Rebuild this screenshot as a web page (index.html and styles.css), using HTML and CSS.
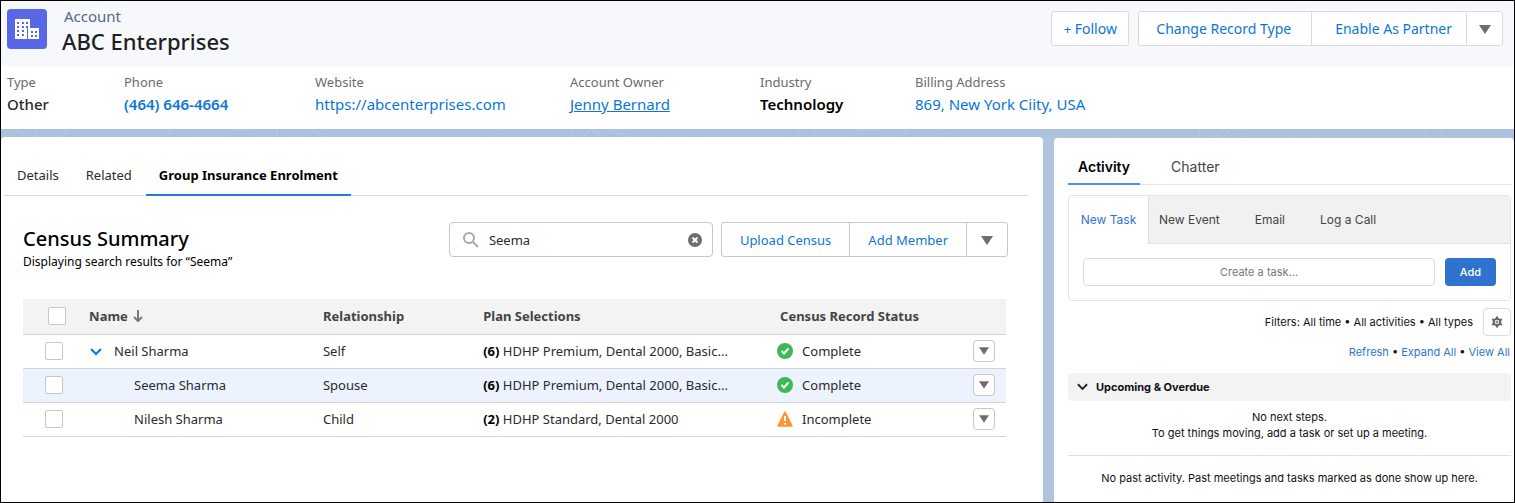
FILE: index.html
```html
<!DOCTYPE html>
<html lang="en">
<head>
    <meta charset="UTF-8">
    <meta name="viewport" content="width=device-width, initial-scale=1.0">
    <title>ABC Enterprises | Account</title>
    <link rel="stylesheet" href="styles.css">
</head>
<body>
<div class="page">
    <header class="record-header">
        <svg class="record-icon" viewBox="0 0 40 40" aria-hidden="true">
            <rect width="40" height="40" rx="4" fill="#5867e8"/>
            <path fill="#fff" d="M8 10h15v9h9v11H8z"/>
            <path fill="#5867e8" d="M10 13h2v2h-2zm5 0h2v2h-2zm4 0h2v2h-2zM10 17h2v2h-2zm5 0h2v2h-2zm4 0h2v2h-2zM10 21h2v2h-2zm5 0h2v2h-2zM10 25h2v2h-2zm5 0h2v2h-2zM20 19h1v11h-1zM24 22h2v2h-2zm4 0h2v2h-2zM24 26h2v2h-2zm4 0h2v2h-2z"/>
        </svg>
        <div class="record-title">
            <p>Account</p>
            <h1>ABC Enterprises</h1>
        </div>
        <div class="record-actions">
            <button class="btn btn-follow"><small>+</small> Follow</button>
            <div class="btn-group">
                <button class="btn btn-change">Change Record Type</button>
                <button class="btn btn-enable">Enable As Partner</button>
                <button class="btn btn-more" aria-label="More actions"><svg class="caret" viewBox="0 0 12 9"><path d="M0 0h12L6 9z"/></svg></button>
            </div>
        </div>
    </header>

    <dl class="fields">
        <div><dt>Type</dt><dd class="strong">Other</dd></div>
        <div><dt>Phone</dt><dd class="bold"><a href="#">(464) 646-4664</a></dd></div>
        <div><dt>Website</dt><dd><a href="#">https://abcenterprises.com</a></dd></div>
        <div><dt>Account Owner</dt><dd><a class="underlined" href="#">Jenny Bernard</a></dd></div>
        <div><dt>Industry</dt><dd class="bold">Technology</dd></div>
        <div><dt>Billing Address</dt><dd><a href="#">869, New York Ciity, USA</a></dd></div>
    </dl>

    <svg class="band" viewBox="0 0 1513 8" preserveAspectRatio="xMidYMid slice" aria-hidden="true">
        <path d="M14 0l12 8M38 8l-4-8M62 8l4-8M166 8l4-8M184 8l3-8M230 0q10 3 20 0M275 8l2-8M310 0l14 8M490 8l6-8M570 8l2-8M582 8l8-8M590 0l12 8M606 0l24 8M662 0l6 8M690 8l8-8M796 8l2-8M812 8l3-8M855 0q10 3 22 0M902 8l4-8M940 0l10 8M1116 8l6-8M1198 8v-8M1210 8l14-8M1222 8l8-8M1232 0l12 8M1290 8l6-8M1316 8l6-8M1424 8l2-8M1440 8l2-8"/>
    </svg>

    <div class="columns">
        <main class="card">
            <nav class="tabs">
                <a href="#">Details</a>
                <a href="#">Related</a>
                <a class="active" href="#">Group Insurance Enrolment</a>
            </nav>

            <section class="census">
                <div class="census-head">
                    <div class="census-title">
                        <h2>Census Summary</h2>
                        <p>Displaying search results for “Seema”</p>
                    </div>
                    <div class="search">
                        <svg class="search-icon" viewBox="0 0 16 16" aria-hidden="true"><circle cx="6" cy="6" r="5"/><path d="M10 10l5 5"/></svg>
                        <input type="text" value="Seema" aria-label="Search members">
                        <button class="clear" aria-label="Clear search"><svg viewBox="0 0 14 14"><circle cx="7" cy="7" r="7"/><path d="M4.500 4.500l5 5M9.500 4.500l-5 5"/></svg></button>
                    </div>
                    <div class="btn-group census-actions">
                        <button class="btn">Upload Census</button>
                        <button class="btn">Add Member</button>
                        <button class="btn btn-more" aria-label="More actions"><svg class="caret" viewBox="0 0 12 9"><path d="M0 0h12L6 9z"/></svg></button>
                    </div>
                </div>

                <table class="census-table">
                    <colgroup>
                        <col class="col-check"><col class="col-name"><col class="col-relation"><col class="col-plan"><col class="col-status"><col class="col-action">
                    </colgroup>
                    <thead>
                        <tr>
                            <th><input type="checkbox" aria-label="Select all"></th>
                            <th>Name <svg class="sort" viewBox="0 0 10 12" aria-hidden="true"><path d="M5 0v11M1 7l4 4 4-4"/></svg></th>
                            <th>Relationship</th>
                            <th>Plan Selections</th>
                            <th>Census Record Status</th>
                            <th></th>
                        </tr>
                    </thead>
                    <tbody>
                        <tr>
                            <td><input type="checkbox" aria-label="Select Neil Sharma"></td>
                            <td class="parent"><button class="toggle" aria-label="Collapse"><svg viewBox="0 0 12 8"><path d="M1 1l5 5 5-5"/></svg></button>Neil Sharma</td>
                            <td>Self</td>
                            <td><b>(6)</b> HDHP Premium, Dental 2000, Basic...</td>
                            <td class="status"><svg viewBox="0 0 16 16" aria-hidden="true"><circle cx="8" cy="8" r="8" fill="#3dba56"/><path class="mark" d="M4.500 8l2.500 2.500 4.500-5"/></svg>Complete</td>
                            <td><button class="row-menu" aria-label="Row actions"><svg class="caret" viewBox="0 0 12 9"><path d="M0 0h12L6 9z"/></svg></button></td>
                        </tr>
                        <tr class="match">
                            <td><input type="checkbox" aria-label="Select Seema Sharma"></td>
                            <td class="child">Seema Sharma</td>
                            <td>Spouse</td>
                            <td><b>(6)</b> HDHP Premium, Dental 2000, Basic...</td>
                            <td class="status"><svg viewBox="0 0 16 16" aria-hidden="true"><circle cx="8" cy="8" r="8" fill="#3dba56"/><path class="mark" d="M4.500 8l2.500 2.500 4.500-5"/></svg>Complete</td>
                            <td><button class="row-menu" aria-label="Row actions"><svg class="caret" viewBox="0 0 12 9"><path d="M0 0h12L6 9z"/></svg></button></td>
                        </tr>
                        <tr>
                            <td><input type="checkbox" aria-label="Select Nilesh Sharma"></td>
                            <td class="child">Nilesh Sharma</td>
                            <td>Child</td>
                            <td><b>(2)</b> HDHP Standard, Dental 2000</td>
                            <td class="status"><svg viewBox="0 0 16 16" aria-hidden="true"><path d="M8 1l7 14H1z" fill="#ff9232" stroke="#ff9232" stroke-width="1.500" stroke-linejoin="round"/><path class="mark" d="M8 5v5M8 12v1.500"/></svg>Incomplete</td>
                            <td><button class="row-menu" aria-label="Row actions"><svg class="caret" viewBox="0 0 12 9"><path d="M0 0h12L6 9z"/></svg></button></td>
                        </tr>
                    </tbody>
                </table>
            </section>
        </main>

        <aside class="card activity">
            <nav class="side-tabs">
                <a class="active" href="#">Activity</a>
                <a href="#">Chatter</a>
            </nav>

            <div class="composer">
                <div class="composer-tabs">
                    <button class="active">New Task</button>
                    <div class="composer-rest">
                        <button>New Event</button>
                        <button>Email</button>
                        <button>Log a Call</button>
                    </div>
                </div>
                <div class="composer-body">
                    <input type="text" placeholder="Create a task..." aria-label="Create a task">
                    <button class="add">Add</button>
                </div>
            </div>

            <div class="filters">
                <span>Filters: All time • All activities • All types</span>
                <button class="settings" aria-label="Timeline settings">
                    <svg viewBox="0 0 12 12"><path d="M6 .5v2M6 9.500v2M1.200 3.200l1.800 1.100M9 7.700l1.800 1.100M1.200 8.800L3 7.700M9 4.300l1.800-1.100"/><circle cx="6" cy="6" r="3.300"/><circle class="hub" cx="6" cy="6" r="1"/></svg>
                </button>
            </div>
            <p class="links"><a href="#">Refresh</a> • <a href="#">Expand All</a> • <a href="#">View All</a></p>

            <h3 class="upcoming"><svg viewBox="0 0 12 8" aria-hidden="true"><path d="M1 1l5 5 5-5"/></svg>Upcoming &amp; Overdue</h3>
            <p class="empty">No next steps.<br>To get things moving, add a task or set up a meeting.</p>
            <p class="past">No past activity. Past meetings and tasks marked as done show up here.</p>
        </aside>
    </div>
</div>
</body>
</html>
```
FILE: styles.css
```css
* {
    box-sizing: border-box;
}
body, h1, h2, h3, p, dl, dd {
    margin: 0;
}
body {
    font-family: "Noto Sans", "Open Sans", sans-serif;
    font-size: 13px;
    line-height: 18px;
    color: #2b2b2b;
}
a {
    color: #0b76d8;
    text-decoration: none;
}
button, input {
    font: inherit;
}
button {
    padding: 0;
    border: none;
    background: none;
    cursor: pointer;
}
svg {
    flex: none;
}
.page {
    display: flex;
    flex-direction: column;
    min-height: 100vh;
    border: 1px solid #000;
    background: #fff;
}

/* Record header */
.record-header {
    display: flex;
    align-items: flex-start;
    padding: 6px 11px 9px 6px;
    background: #f7f8fb;
}
.record-icon {
    width: 40px;
    height: 40px;
    margin-top: 2px;
}
.record-title {
    margin-left: 15px;
}
.record-title p {
    padding-left: 2px;
    color: #54698d;
    font-size: 15px;
}
.record-title h1 {
    font-size: 22px;
    line-height: 32px;
    font-weight: 500;
    color: #1f1f1f;
}
.record-actions {
    display: flex;
    gap: 9px;
    margin: 4px 0 0 auto;
}
.btn {
    height: 35px;
    padding: 0 16px;
    border: 1px solid #dddbda;
    border-radius: 3px;
    background: #fff;
    color: #0b76d8;
    font-size: 14px;
    white-space: nowrap;
}
.btn small {
    font-size: 13px;
}
.btn-follow {
    width: 78px;
    padding: 0;
}
.btn-change {
    padding: 0 20px 0 17px;
}
.btn-enable {
    padding: 0 14px 0 23px;
}
.btn-group {
    display: flex;
}
.btn-group .btn + .btn {
    margin-left: -1px;
}
.btn-group .btn:not(:first-child) {
    border-top-left-radius: 0;
    border-bottom-left-radius: 0;
}
.btn-group .btn:not(:last-child) {
    border-top-right-radius: 0;
    border-bottom-right-radius: 0;
}
.btn-more {
    width: 37px;
    padding: 0;
}
.caret {
    width: 12px;
    height: 9px;
    fill: #706e6b;
}

/* Highlight fields */
.fields {
    display: grid;
    grid-template-columns: 117fr 191fr 255fr 190fr 155fr 599fr;
    padding: 7px 0 12px 6px;
}
.fields dt {
    color: #6b6b6b;
}
.fields dd {
    font-size: 15px;
    line-height: 26px;
}
.strong {
    font-weight: 500;
}
.bold {
    color: #000;
    font-weight: 600;
}
.underlined {
    text-decoration: underline;
}
.band {
    display: block;
    width: 100%;
    height: 8px;
    background: #abc2de;
    fill: none;
    stroke: #b6cae2;
}

/* Columns */
.columns {
    flex: 1;
    display: grid;
    grid-template-columns: 1042fr 460fr;
    gap: 11px;
    background: #b0c4de;
}
.card {
    background: #fff;
    border-radius: 4px 4px 0 0;
}
.tabs {
    display: flex;
    gap: 1px;
    margin: 18px 15px 0 3px;
    border-bottom: 1px solid #dddbda;
}
.tabs a {
    padding: 11px 13px 10px;
    color: #2b2b2b;
}
.tabs .active {
    margin-bottom: -1px;
    border-bottom: 2px solid #1b7fe0;
    color: #000;
    font-weight: 700;
}

/* Census list */
.census {
    padding: 26px 37px 0 22px;
}
.census-head {
    display: flex;
    align-items: flex-start;
    height: 50px;
    margin-right: -2px;
}
.census-title {
    margin-right: auto;
    padding-top: 1px;
    color: #000;
}
.census-title h2 {
    font-size: 20px;
    line-height: 32px;
    font-weight: 500;
}
.census-title p {
    font-size: 12px;
    line-height: 14px;
}
.search {
    display: flex;
    align-items: center;
    width: 264px;
    height: 35px;
    padding: 0 10px 0 13px;
    border: 1px solid #c9c7c5;
    border-radius: 4px;
}
.search-icon {
    width: 16px;
    height: 16px;
    fill: none;
    stroke: #a8a8a8;
    stroke-width: 2;
}
.search input {
    flex: 1;
    min-width: 0;
    padding: 0 0 0 10px;
    border: none;
    outline: none;
    color: #2b2b2b;
}
.clear svg {
    display: block;
    width: 14px;
    height: 14px;
    fill: #706e6b;
    stroke: #fff;
    stroke-width: 2;
}
.clear circle {
    stroke: none;
}
.census-actions {
    margin-left: 8px;
}
.census-actions .btn {
    padding: 0 18px;
    border-color: #c9c7c5;
    font-size: 13px;
}
.census-actions .btn-more {
    width: 42px;
    padding: 0;
}
.census-table {
    width: 100%;
    margin-top: 27px;
    border-collapse: collapse;
    table-layout: fixed;
}
.col-check { width: 5.5%; }
.col-name { width: 24%; }
.col-relation { width: 16.3%; }
.col-plan { width: 30.2%; }
.col-status { width: 20%; }
.census-table th, .census-table td {
    height: 34px;
    padding: 0 0 0 10px;
    border-bottom: 1px solid #d4d4d4;
    text-align: left;
    white-space: nowrap;
}
.census-table th {
    height: 35px;
    background: #f3f3f3;
    color: #444;
    font-weight: 700;
}
.census-table th:nth-child(2) {
    padding-left: 12px;
}
.census-table th:first-child {
    padding-left: 25px;
}
.census-table td:first-child {
    padding-left: 22px;
}
.census-table td:last-child {
    padding: 0 11px 0 0;
    text-align: right;
}
.census-table input {
    display: block;
    appearance: none;
    width: 18px;
    height: 18px;
    margin: 0;
    border: 1px solid #c9c7c5;
    border-radius: 2px;
    background: #fff;
}
.census-table b {
    color: #000;
    font-weight: 700;
}
.sort {
    width: 10px;
    height: 12px;
    margin-left: 2px;
    vertical-align: -1px;
    fill: none;
    stroke: #777;
    stroke-width: 2;
}
.census-table .parent {
    padding-left: 13px;
}
.census-table .child {
    padding-left: 57px;
}
.toggle {
    margin-right: 12px;
}
.toggle svg {
    width: 12px;
    height: 8px;
    fill: none;
    stroke: #0b76d8;
    stroke-width: 2;
}
.match {
    background: #ecf2fe;
}
.census-table .status {
    padding-left: 7px;
}
.status svg {
    width: 16px;
    height: 16px;
    margin-right: 9px;
    vertical-align: -3px;
}
.status .mark {
    fill: none;
    stroke: #fff;
    stroke-width: 2;
}
.row-menu {
    width: 22px;
    height: 22px;
    border: 1px solid #c9c7c5;
    border-radius: 4px;
    background: #fff;
    vertical-align: middle;
}
.row-menu .caret {
    display: block;
    width: 10px;
    height: 8px;
    margin: auto;
}

/* Activity panel */
.activity {
    padding: 18px 3px 0 14px;
    margin-top: 1px;
    font-family: Inter, sans-serif;
    font-size: 11px;
    line-height: 16px;
    color: #111;
}
.side-tabs {
    display: flex;
    gap: 21px;
    border-bottom: 1px solid #e5e5e5;
    font-size: 14px;
}
.side-tabs a {
    padding: 3px 10px 8px;
    color: #444;
}
.side-tabs .active {
    margin-bottom: -1px;
    border-bottom: 2px solid #4d8ff7;
    color: #000;
    font-weight: 600;
}
.composer {
    margin-top: 10px;
    border: 1px solid #e5e5e5;
    border-radius: 4px;
}
.composer-tabs {
    display: flex;
    height: 48px;
    font-size: 12px;
}
.composer-tabs button {
    color: #444;
}
.composer-tabs .active {
    width: 79px;
    color: #2f74cf;
}
.composer-rest {
    flex: 1;
    display: flex;
    gap: 35px;
    padding-left: 10px;
    border: solid #e0e0e0;
    border-width: 0 0 1px 1px;
    background: #f1f1f1;
}
.composer-body {
    display: flex;
    gap: 10px;
    padding: 14px;
}
.composer-body input {
    flex: 1;
    min-width: 0;
    height: 28px;
    border: 1px solid #dcdcdc;
    border-radius: 4px;
    text-align: center;
}
.composer-body input::placeholder {
    color: #777;
}
.add {
    width: 51px;
    height: 28px;
    border-radius: 4px;
    background: #2e74cf;
    color: #fff;
    font-weight: 500;
}
.filters {
    display: flex;
    justify-content: flex-end;
    align-items: center;
    gap: 10px;
    margin-top: 7px;
}
.settings {
    width: 28px;
    height: 28px;
    border: 1px solid #dcdcdc;
    border-radius: 4px;
}
.settings svg {
    display: block;
    width: 12px;
    height: 12px;
    margin: auto;
    fill: none;
    stroke: #666;
    stroke-width: 2;
}
.settings .hub {
    stroke-width: 1;
}
.links {
    margin-top: 8px;
    padding-right: 1px;
    text-align: right;
}
.links a {
    color: #2f74cf;
}
.upcoming {
    display: flex;
    align-items: center;
    gap: 8px;
    height: 28px;
    margin-top: 13px;
    padding-left: 9px;
    border-radius: 4px;
    background: #f3f3f3;
    font-size: 11px;
    font-weight: 700;
}
.upcoming svg {
    width: 11px;
    height: 8px;
    fill: none;
    stroke: #222;
    stroke-width: 2;
}
.empty {
    padding: 8px 0 14px;
    border-bottom: 1px solid #e0e0e0;
    text-align: center;
}
.past {
    padding: 14px 0;
    text-align: center;
}
```
